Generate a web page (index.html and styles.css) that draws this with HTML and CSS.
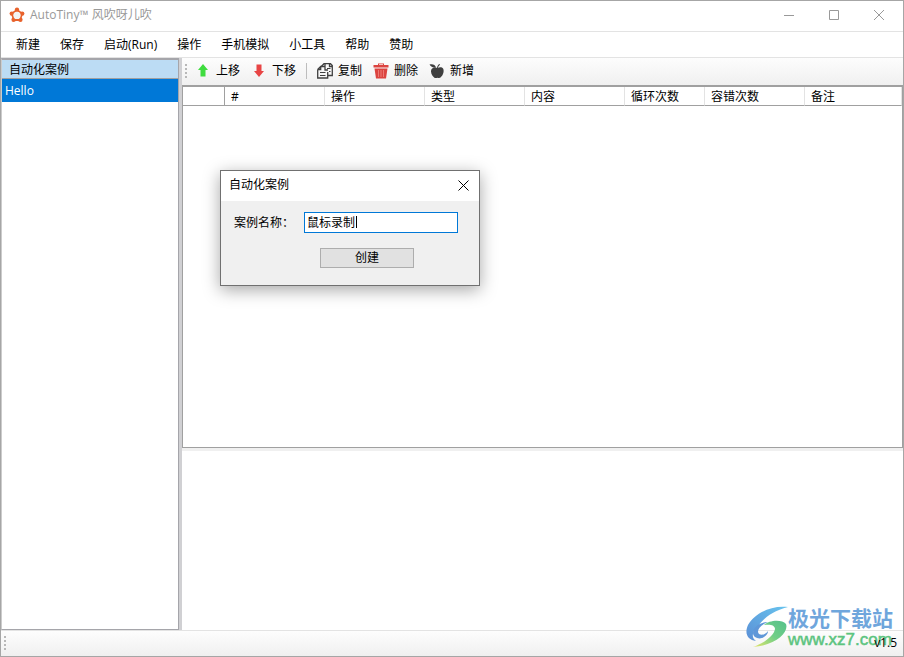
FILE: index.html
```html
<!DOCTYPE html>
<html lang="zh-CN">

<head>
    <meta charset="UTF-8">
    <meta name="viewport" content="width=device-width, initial-scale=1.0">
    <title>AutoTiny</title>
    <link rel="stylesheet" href="styles.css">
</head>

<body>
    <div class="window">
        <header class="titlebar">
            <svg class="logo" width="16" height="16" viewBox="0 0 16 16">
                <path d="M8 3 L13 6.6 L11 13 L5 13 L3 6.6 Z" fill="none" stroke="#e8622c" stroke-width="2" />
                <g fill="#e8622c">
                    <circle cx="8" cy="2.8" r="2.2" />
                    <circle cx="13.2" cy="6.6" r="2.2" />
                    <circle cx="11.4" cy="12.8" r="2.2" />
                    <circle cx="4.6" cy="12.8" r="2.2" />
                    <circle cx="2.8" cy="6.6" r="2.2" />
                </g>
                <circle cx="8" cy="8.4" r="3.6" fill="#f3f3f3" />
            </svg>
            <h1 class="title">AutoTiny™ 风吹呀儿吹</h1>
            <div class="controls">
                <button type="button" aria-label="最小化">
                    <svg width="10" height="10" viewBox="0 0 10 10"><path d="M0 5.5h10" /></svg>
                </button>
                <button type="button" aria-label="最大化">
                    <svg width="10" height="10" viewBox="0 0 10 10"><path d="M.5 .5h9v9h-9z" /></svg>
                </button>
                <button type="button" aria-label="关闭">
                    <svg width="10" height="10" viewBox="0 0 10 10"><path d="M0 0l10 10M10 0L0 10" /></svg>
                </button>
            </div>
        </header>

        <nav class="menu">
            <button type="button">新建</button>
            <button type="button">保存</button>
            <button type="button">启动(Run)</button>
            <button type="button">操作</button>
            <button type="button">手机模拟</button>
            <button type="button">小工具</button>
            <button type="button">帮助</button>
            <button type="button">赞助</button>
        </nav>

        <div class="main">
            <aside class="sidebar">
                <h2 class="sidebar-head">自动化案例</h2>
                <ul class="cases">
                    <li class="active">Hello</li>
                </ul>
            </aside>

            <section class="content">
                <div class="toolbar">
                    <span class="grip"></span>
                    <button type="button">
                        <svg width="16" height="16" viewBox="0 0 16 16">
                            <path d="M8 1l5 6h-2.500v6.500h-5V7H3z" fill="#3fdc3f" />
                        </svg>
                        上移
                    </button>
                    <button type="button">
                        <svg width="16" height="16" viewBox="0 0 16 16">
                            <path d="M8 14l5-6h-2.500V1.500h-5V8H3z" fill="#e84545" />
                        </svg>
                        下移
                    </button>
                    <span class="separator"></span>
                    <button type="button">
                        <svg width="16" height="16" viewBox="0 0 16 16" fill="none" stroke="#404040">
                            <path d="M4 3.700L7 .7h6.500l1.800 1.800v10H11M12.500 .7v2.800h2.800" stroke-width="1.300" />
                            <path d="M.7 6.500l3-3h4.300M.7 6.500v8.500h10V9M3.700 3.500v3h-3M8 1v6h3" stroke-width="1.300" />
                            <path d="M3 9.500h5.500M3 12.500h5.500M10 5.500h3.500M12 8.500h1.500" />
                        </svg>
                        复制
                    </button>
                    <button type="button">
                        <svg width="16" height="16" viewBox="0 0 16 16">
                            <path d="M5 2V.5h6V2h4.500v2.500H.5V2zM1.500 5.500h13L13 15.500H3z" fill="#dc4440" />
                            <path d="M5.500 7v7M8 7v7M10.500 7v7" stroke="#ec7a74" />
                            <path d="M6 1.500h4" stroke="#f5c4c0" />
                        </svg>
                        删除
                    </button>
                    <button type="button">
                        <svg width="16" height="16" viewBox="0 0 16 16" fill="#404040">
                            <path d="M8.500 5c2-1 4.500-1 5.700.8 1.200 2.700-.2 6.700-2.700 8.700-1 .8-2 .3-3 .2-1 .3-2.300.7-3.400-.2C2.600 12.500 1.500 9 2.200 6.800 3.500 4.300 6.500 4 8.500 5z" />
                            <path d="M.5 1.500c3-1 5.800.2 6.600 3C4.500 5 1.800 4 .5 1.500zM8 5C8.200 3 8.900 2 10.300 1l.8.8C9.700 2.800 9.200 3.500 9 5z" />
                        </svg>
                        新增
                    </button>
                </div>

                <div class="steps">
                    <table>
                        <colgroup>
                            <col class="col-row">
                            <col class="col-wide">
                            <col class="col-wide">
                            <col class="col-wide">
                            <col class="col-wide">
                            <col class="col-count">
                            <col class="col-wide">
                            <col>
                        </colgroup>
                        <thead>
                            <tr>
                                <th></th>
                                <th>#</th>
                                <th>操作</th>
                                <th>类型</th>
                                <th>内容</th>
                                <th>循环次数</th>
                                <th>容错次数</th>
                                <th>备注</th>
                            </tr>
                        </thead>
                    </table>
                </div>
                <div class="log"></div>
            </section>
        </div>

        <footer class="statusbar">
            <span class="grip"></span>
            <span class="version">v1.5</span>
        </footer>
    </div>

    <div class="watermark">
        <svg width="42" height="42" viewBox="0 0 42 42">
            <defs>
                <linearGradient id="blue" x1="0" y1="1" x2="1" y2="0">
                    <stop offset="0" stop-color="#5b8fd6" />
                    <stop offset="1" stop-color="#68c4ee" />
                </linearGradient>
                <linearGradient id="green" x1="0" y1="1" x2="1" y2="0">
                    <stop offset="0" stop-color="#e6e66a" />
                    <stop offset=".5" stop-color="#72cf86" />
                    <stop offset="1" stop-color="#55c08c" />
                </linearGradient>
            </defs>
            <path d="M42 1C24-1 8 8 2 19c-4 9 0 15 8 16-5-3-4-10 2-15C19 11 27 5 42 1z" fill="url(#blue)" />
            <path d="M22 16c-8 0-15 5-15 11 0 5 7 7 11 4 3-2 4-4 4-6-2 3-6 5-9 3-3-3 1-9 9-12z" fill="#5f97d8" />
            <path d="M18 19c5-5 18-6 22-1 3 8-9 21-33 23 11-4 21-11 22-18 0-4-5-5-11-4z" fill="url(#green)" />
        </svg>
        <div class="watermark-text">
            <strong>极光下载站</strong>
            <span>www.xz7.com</span>
        </div>
    </div>

    <form class="dialog" role="dialog" aria-labelledby="dialog-title">
        <div class="dialog-head">
            <h2 id="dialog-title">自动化案例</h2>
            <button type="button" class="dialog-close" aria-label="关闭">
                <svg width="11" height="11" viewBox="0 0 11 11"><path d="M.5 .5l10 10M10.500 .5l-10 10" /></svg>
            </button>
        </div>
        <div class="dialog-body">
            <div class="field">
                <label for="case-name">案例名称：</label>
                <div class="input-wrap">
                    <input type="text" id="case-name" value="鼠标录制">
                    <span class="caret"></span>
                </div>
            </div>
            <button type="button" class="create">创建</button>
        </div>
    </form>
</body>

</html>
```
FILE: styles.css
```css
* {
    box-sizing: border-box;
    margin: 0;
    padding: 0;
}

body {
    font: 12px/16px "Open Sans", "Noto Sans CJK SC", sans-serif;
    color: #000;
    background: #fff;
}

button,
input {
    font: inherit;
    color: inherit;
}

button {
    border: 0;
    background: none;
}

h1,
h2,
th {
    font-size: 12px;
    font-weight: normal;
}

svg {
    display: block;
    flex: none;
}

.window {
    display: flex;
    flex-direction: column;
    height: 100vh;
    border: 1px solid #a6a6a6;
}

/* title bar */
.titlebar {
    display: flex;
    align-items: center;
    height: 31px;
    padding: 0 2px 2px 8px;
    border-bottom: 1px solid #e3e3e3;
}

.title {
    flex: 1;
    margin-left: 5px;
    color: #999;
}

.controls {
    display: flex;
}

.controls button {
    display: flex;
    align-items: center;
    justify-content: center;
    width: 45px;
    height: 28px;
}

.controls svg {
    fill: none;
    stroke: #999;
}

/* menu */
.menu {
    display: flex;
    height: 26px;
    padding-left: 5px;
    border-bottom: 1px solid #e3e3e3;
}

.menu button {
    padding: 0 10px;
}

.main {
    display: flex;
    flex: 1;
    min-height: 0;
}

/* case list */
.sidebar {
    width: 178px;
    border: 1px solid #a5a5aa;
    border-top-width: 2px;
    border-left-color: #ccc;
}

.sidebar-head {
    height: 19px;
    padding-left: 7px;
    line-height: 19px;
    background: #bcdcf4;
    border-bottom: 1px solid #a0a0a0;
}

.cases {
    list-style: none;
}

.cases li {
    padding: 4px 3px 3px;
}

.cases .active {
    color: #fff;
    background: #0078d7;
}

.content {
    display: flex;
    flex: 1;
    flex-direction: column;
    min-width: 0;
    border-left: 3px solid #d0d0d3;
}

/* toolbar */
.toolbar {
    display: flex;
    align-items: center;
    height: 27px;
    padding: 0 0 1px 3px;
    background: linear-gradient(#fdfdfd, #f0f0f0);
}

.toolbar button {
    display: flex;
    align-items: center;
    gap: 5px;
    margin-right: 1px;
    padding: 0 5px;
}

.grip {
    width: 2px;
    height: 14px;
    background: repeating-linear-gradient(#b8b8b8 0 2px, transparent 2px 4px);
}

.toolbar .grip {
    margin-right: 3px;
}

.separator {
    width: 1px;
    height: 16px;
    margin: 0 5px 0 4px;
    background: #bdbdbd;
}

/* step grid */
.steps {
    flex: 364;
    border: 1px solid #a0a0a0;
    border-top-width: 2px;
}

.steps table {
    width: 100%;
    table-layout: fixed;
    border-collapse: separate;
    border-spacing: 0;
}

.steps th {
    height: 19px;
    padding: 1px 0 0 6px;
    text-align: left;
    border-right: 1px solid #e3e3e3;
    border-bottom: 1px solid #a0a0a0;
}

.steps th:first-child {
    border-right-color: #a0a0a0;
}

.col-row {
    width: 42px;
}

.col-wide {
    width: 100px;
}

.col-count {
    width: 80px;
}

.log {
    flex: 181;
    border-top: 3px solid #f0f0f0;
}

/* status bar */
.statusbar {
    display: flex;
    align-items: center;
    justify-content: space-between;
    height: 26px;
    padding: 0 6px 2px 3px;
    background: linear-gradient(#fdfdfd, #f0f0f0);
    border-top: 1px solid #e3e3e3;
}

.version {
    position: relative;
    z-index: 2;
}

.watermark {
    position: absolute;
    right: 11px;
    bottom: 7px;
    z-index: 1;
    display: flex;
}

.watermark-text {
    display: flex;
    flex-direction: column;
    color: #6fa6dc;
}

.watermark strong {
    font-size: 21px;
    line-height: 24px;
}

.watermark span {
    font: 17px/20px "Liberation Sans", sans-serif;
    color: #5cc47f;
    -webkit-text-stroke: 0.5px #5cc47f;
}

/* new case dialog */
.dialog {
    position: absolute;
    top: 170px;
    left: 220px;
    width: 260px;
    background: #f0f0f0;
    border: 1px solid #707070;
    box-shadow: 0 4px 16px rgba(0, 0, 0, 0.35);
}

.dialog-head {
    display: flex;
    align-items: center;
    justify-content: space-between;
    height: 30px;
    padding: 0 10px 2px 8px;
    background: #fff;
}

.dialog-close svg {
    fill: none;
    stroke: #000;
}

.dialog-body {
    display: flex;
    flex-direction: column;
    padding: 11px 21px 17px 13px;
}

.field {
    display: flex;
    align-items: center;
    justify-content: space-between;
}

.input-wrap {
    position: relative;
    width: 154px;
}

.input-wrap input {
    display: block;
    width: 100%;
    height: 21px;
    padding: 0 2px 2px;
    background: #fff;
    border: 1px solid #0078d7;
    outline: 0;
}

.caret {
    position: absolute;
    top: 4px;
    left: 52px;
    width: 1px;
    height: 12px;
    background: #000;
}

.create {
    width: 94px;
    height: 20px;
    margin: 15px 0 0 86px;
    background: #e1e1e1;
    border: 1px solid #adadad;
}
```
